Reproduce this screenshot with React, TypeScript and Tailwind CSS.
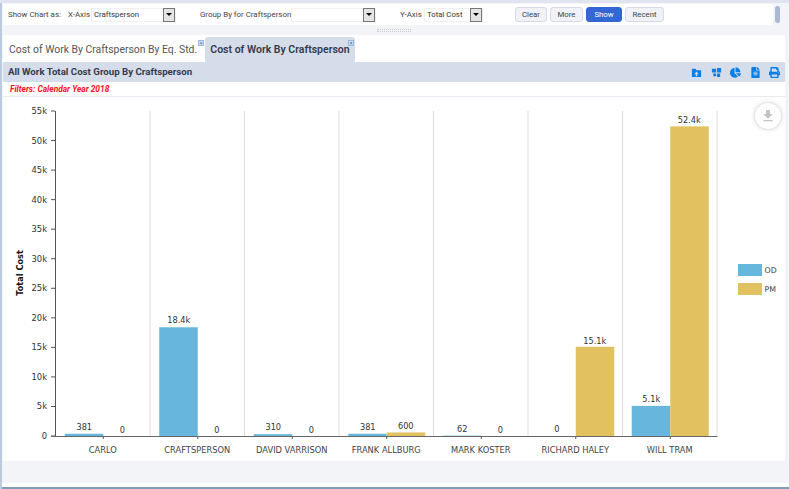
import { FaChartPie, FaFileAlt, FaPrint } from 'react-icons/fa'
import { MdDownload } from 'react-icons/md'

const categories = [
    { name: 'CARLO', od: 381, pm: 0, odLabel: '381', pmLabel: '0' },
    { name: 'CRAFTSPERSON', od: 18400, pm: 0, odLabel: '18.4k', pmLabel: '0' },
    { name: 'DAVID VARRISON', od: 310, pm: 0, odLabel: '310', pmLabel: '0' },
    { name: 'FRANK ALLBURG', od: 381, pm: 600, odLabel: '381', pmLabel: '600' },
    { name: 'MARK KOSTER', od: 62, pm: 0, odLabel: '62', pmLabel: '0' },
    { name: 'RICHARD HALEY', od: 0, pm: 15100, odLabel: '0', pmLabel: '15.1k' },
    { name: 'WILL TRAM', od: 5100, pm: 52400, odLabel: '5.1k', pmLabel: '52.4k' },
]

const ticks = [0, 5, 10, 15, 20, 25, 30, 35, 40, 45, 50, 55]

function Select({ value, width }: { value: string; width: string }) {
    return (
        <div className={`flex items-center h-[14px] bg-white border border-[#eef0f4] ${width}`}>
            <span className="flex-1 pl-[2px] text-[7.8px] text-[#333] whitespace-nowrap overflow-hidden">{value}</span>
            <span className="w-[12px] h-[14px] flex items-center justify-center bg-[#e4e4e4] border border-[#777]">
                <span className="w-0 h-0 border-x-[3px] border-x-transparent border-t-[3px] border-t-black" />
            </span>
        </div>
    )
}

function ToolButton({ label, width, active }: { label: string; width: string; active?: boolean }) {
    return (
        <button
            className={`h-[15px] rounded-[3px] border text-[7.8px] leading-none ${width} ${active
                ? 'bg-[#3367d6] border-[#3367d6] text-white'
                : 'bg-[#f0f2f8] border-[#d6dae6] text-[#444]'}`}
        >
            {label}
        </button>
    )
}

function CloseMark() {
    return (
        <span className="absolute top-[3px] right-[1px] w-[6px] h-[6px] flex items-center justify-center bg-[#cfe0f2] border border-[#9db8d6] text-[5px] leading-none text-[#4a76a8]">
            ×
        </span>
    )
}

function Chart() {
    const zeroY = 436
    const perUnit = 325 / 55000
    const catW = 94.5
    const left = 55.5

    return (
        <svg viewBox="0 0 782 364" className="w-[782px] h-[364px] block" style={{ fontFamily: '"DejaVu Sans", Verdana, sans-serif' }}>
            <g transform="translate(-3 -97)">
                {categories.map((_, i) => (
                    <line key={i} x1={left + catW * (i + 1)} x2={left + catW * (i + 1)} y1={111} y2={436} stroke="#dddddd" strokeWidth={1} />
                ))}

                {categories.map((c, i) => {
                    const mid = left + catW * i + catW / 2
                    const barMid = mid + 0.5
                    const odH = c.od * perUnit
                    const pmH = c.pm * perUnit
                    return (
                        <g key={c.name}>
                            {odH > 0 && <rect x={barMid - 38.5} y={zeroY - odH} width={38.5} height={odH} fill="#66b6dd" />}
                            {pmH > 0 && <rect x={barMid} y={zeroY - pmH} width={38.5} height={pmH} fill="#e1c160" />}
                            <text x={barMid - 19} y={zeroY - odH - 4} textAnchor="middle" fontSize={8.2} fill="#333">{c.odLabel}</text>
                            <text x={barMid + 19} y={zeroY - pmH - 3} textAnchor="middle" fontSize={8.2} fill="#333">{c.pmLabel}</text>
                            <line x1={barMid} x2={barMid} y1={436} y2={439} stroke="#555" />
                            <text x={mid} y={453} textAnchor="middle" fontSize={8.3} fill="#444">{c.name}</text>
                        </g>
                    )
                })}

                {ticks.map((t) => {
                    const y = 436 - t * 5.909
                    return (
                        <g key={t}>
                            <line x1={51} x2={55} y1={y} y2={y} stroke="#555" />
                            <text x={47} y={y + 3} textAnchor="end" fontSize={8.4} fill="#333">{t === 0 ? '0' : `${t}k`}</text>
                        </g>
                    )
                })}

                <line x1={55.5} x2={55.5} y1={111} y2={436} stroke="#555" />
                <line x1={51} x2={717.5} y1={436.5} y2={436.5} stroke="#666" />

                <text transform="translate(23 273) rotate(-90)" textAnchor="middle" fontSize={8.2} fontWeight={700} fill="#111">Total Cost</text>

                <rect x={738} y={264} width={24} height={12} fill="#66b6dd" />
                <text x={764.5} y={273} fontSize={7.8} fill="#444">OD</text>
                <rect x={738} y={283} width={24} height={12} fill="#e1c160" />
                <text x={764.5} y={292} fontSize={7.8} fill="#444">PM</text>
            </g>
        </svg>
    )
}

export default function App() {
    return (
        <div className="w-[789px] h-[489px] flex flex-col overflow-hidden bg-[#f2f4f8] border-t-[3px] border-t-[#dfe4f0] pl-[3px] pr-[4px] relative" style={{ fontFamily: 'Roboto, sans-serif' }}>
            {/* Toolbar */}
            <div className="h-[21px] mt-[1px] flex shrink-0">
                <div className="w-[770px] bg-white flex items-center pl-[5px] text-[7.9px] text-[#444]">
                    <span className="w-[60px] whitespace-nowrap">Show Chart as:</span>
                    <span className="w-[23px] whitespace-nowrap">X-Axis</span>
                    <Select value="Craftsperson" width="w-[85px]" />
                    <span className="ml-[24px] w-[91px] whitespace-nowrap">Group By for Craftsperson</span>
                    <Select value="" width="w-[85px]" />
                    <span className="ml-[24px] w-[24px] whitespace-nowrap">Y-Axis</span>
                    <Select value="Total Cost" width="w-[59px]" />
                    <div className="ml-[32px] flex gap-[3px]">
                        <ToolButton label="Clear" width="w-[32px]" />
                        <ToolButton label="More" width="w-[33px]" />
                        <ToolButton label="Show" width="w-[36px]" active />
                        <ToolButton label="Recent" width="w-[39px]" />
                    </div>
                </div>
                <div className="ml-[1px] flex-1 flex justify-center pt-[2px] pr-[4px]">
                    <div className="w-[5px] h-[17px] rounded-full bg-[#a9b9d4]" />
                </div>
            </div>

            {/* Splitter */}
            <div className="h-[10px] shrink-0 flex items-center justify-center">
                <div className="w-[34px] h-[3px] border-y border-dotted border-[#c8ccd4]" />
            </div>

            {/* Tabs */}
            <div className="h-[27px] shrink-0 bg-white flex items-end">
                <div className="relative w-[202px] h-[25px] pl-[6px] flex items-center text-[10.4px] text-[#555] whitespace-nowrap">
                    Cost of Work By Craftsperson By Eq. Std.
                    <CloseMark />
                </div>
                <div className="relative w-[150px] h-[25px] rounded-t-[3px] bg-[#d5dcea] flex items-center justify-center text-[10.5px] font-semibold text-[#333a4d] whitespace-nowrap">
                    Cost of Work By Craftsperson
                    <CloseMark />
                </div>
            </div>

            {/* Chart panel */}
            <div className="shrink-0 h-[399px] bg-white flex flex-col">
                <div className="h-[20px] shrink-0 bg-[#d5dcea] flex items-center justify-between pl-[5px] pr-[5px]">
                    <span className="text-[9.7px] font-bold text-[#333a4d] whitespace-nowrap">All Work Total Cost Group By Craftsperson</span>
                    <div className="flex items-center gap-[8.5px] text-[#0b7fe6]">
                        <svg viewBox="0 0 12 12" className="w-[11px] h-[11px]" fill="currentColor">
                            <path d="M1 2h4l1 1.5h5V11H1zM6 5 3.8 8h1.4v2h1.6V8h1.4z" fillRule="evenodd" />
                        </svg>
                        <svg viewBox="0 0 12 12" className="w-[11px] h-[11px]" fill="currentColor">
                            <path d="M1 2h4.6v4H1zM6.6 1H11v5H6.6zM2.5 7h3.1v3H2.5zM6.6 7H10v4H6.6z" />
                        </svg>
                        <FaChartPie size={11} />
                        <FaFileAlt size={11} />
                        <FaPrint size={11} />
                    </div>
                </div>
                <div className="h-[15px] shrink-0 pl-[7px] flex items-center border-b border-[#e8ebf2] text-[8.4px] font-bold italic text-[#ff1020] whitespace-nowrap">
                    Filters: Calendar Year 2018
                </div>
                <div className="relative flex-1">
                    <Chart />
                    <div className="absolute top-[6px] right-[4px] w-[26px] h-[26px] rounded-full bg-white shadow-[0_0_4px_rgba(0,0,0,0.25)] flex items-center justify-center text-[#c4c4c4]">
                        <MdDownload size={16} />
                    </div>
                </div>
            </div>

            {/* Footer strip */}
            <div className="absolute left-0 right-0 bottom-0 h-[6px] bg-white border-b-[2px] border-b-[#7d9dbd]" />
            <div className="absolute left-0 top-0 bottom-0 w-[2px] bg-[#b9cbdc]" />
        </div>
    )
}
